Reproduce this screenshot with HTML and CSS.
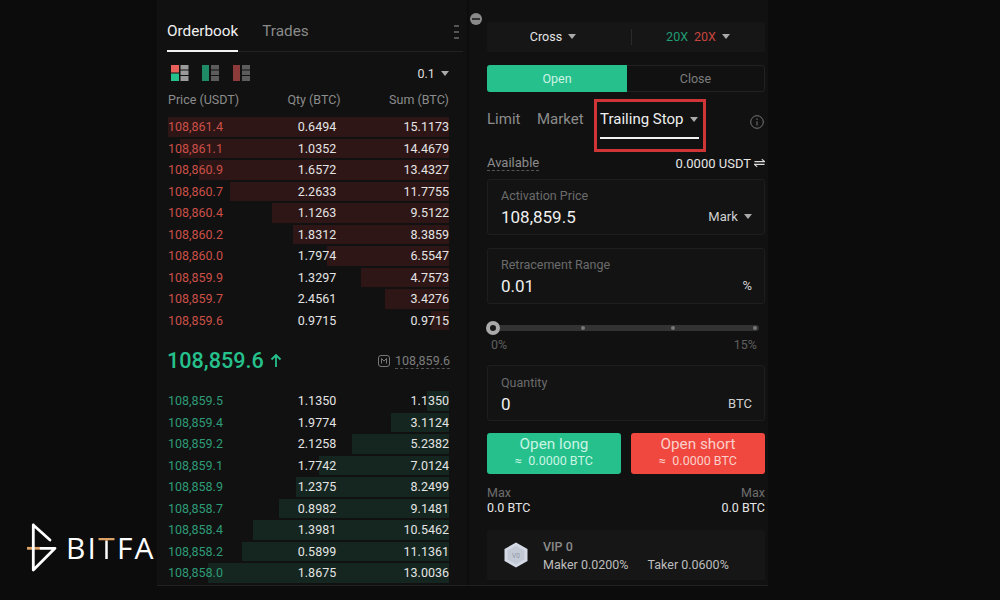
FILE: index.html
```html
<!DOCTYPE html>
<html lang="en">
<head>
    <meta charset="UTF-8">
    <title>BTC Trailing Stop</title>
    <link rel="stylesheet" href="styles.css">
</head>
<body>
    <div class="brand">
        <svg class="brand-mark" width="32" height="50" viewBox="0 0 32 50" fill="none">
            <path d="M0 25.3H14" stroke="#dfa266" stroke-width="2.8"/>
            <path d="M6.3 2V47L28 25.3H14M6.3 2L23 17" stroke="#fff" stroke-width="2.8" stroke-linejoin="round" stroke-linecap="round"/>
        </svg>
        <span class="brand-name">BI<span class="brand-t">T</span>FA</span>
    </div>

    <div class="screen">
        <section class="orderbook">
            <div class="book-tabs">
                <span class="book-tab active">Orderbook</span>
                <span class="book-tab">Trades</span>
                <span class="kebab"></span>
            </div>
            <div class="book-tools">
                <svg width="18" height="16" viewBox="0 0 18 16">
                    <rect x="0" y="0" width="8" height="7.5" fill="#e8605a"/>
                    <rect x="0" y="8.5" width="8" height="7.5" fill="#26c08d"/>
                    <rect x="9.5" y="0" width="8" height="4.5" fill="#9a9a9a"/>
                    <rect x="9.5" y="5.5" width="8" height="4.5" fill="#9a9a9a"/>
                    <rect x="9.5" y="11" width="8" height="5" fill="#9a9a9a"/>
                </svg>
                <svg width="18" height="16" viewBox="0 0 18 16">
                    <rect x="0" y="0" width="7" height="16" fill="#1f8a66"/>
                    <rect x="9" y="0" width="8" height="4.5" fill="#5c5c5c"/>
                    <rect x="9" y="5.5" width="8" height="4.5" fill="#5c5c5c"/>
                    <rect x="9" y="11" width="8" height="5" fill="#5c5c5c"/>
                </svg>
                <svg width="18" height="16" viewBox="0 0 18 16">
                    <rect x="0" y="0" width="7" height="16" fill="#8c3a3a"/>
                    <rect x="9" y="0" width="8" height="4.5" fill="#5c5c5c"/>
                    <rect x="9" y="5.5" width="8" height="4.5" fill="#5c5c5c"/>
                    <rect x="9" y="11" width="8" height="5" fill="#5c5c5c"/>
                </svg>
                <span class="precision">0.1 <i class="caret"></i></span>
            </div>
            <div class="book-head">
                <span>Price (USDT)</span>
                <span>Qty (BTC)</span>
                <span>Sum (BTC)</span>
            </div>

            <div class="rows asks">
                <div class="row"><div class="bar" style="width:100%"></div><span>108,861.4</span><span>0.6494</span><span>15.1173</span></div>
                <div class="row"><div class="bar" style="width:95.7%"></div><span>108,861.1</span><span>1.0352</span><span>14.4679</span></div>
                <div class="row"><div class="bar" style="width:88.9%"></div><span>108,860.9</span><span>1.6572</span><span>13.4327</span></div>
                <div class="row"><div class="bar" style="width:77.9%"></div><span>108,860.7</span><span>2.2633</span><span>11.7755</span></div>
                <div class="row"><div class="bar" style="width:63%"></div><span>108,860.4</span><span>1.1263</span><span>9.5122</span></div>
                <div class="row"><div class="bar" style="width:55.5%"></div><span>108,860.2</span><span>1.8312</span><span>8.3859</span></div>
                <div class="row"><div class="bar" style="width:43.3%"></div><span>108,860.0</span><span>1.7974</span><span>6.5547</span></div>
                <div class="row"><div class="bar" style="width:31.5%"></div><span>108,859.9</span><span>1.3297</span><span>4.7573</span></div>
                <div class="row"><div class="bar" style="width:22.7%"></div><span>108,859.7</span><span>2.4561</span><span>3.4276</span></div>
                <div class="row"><div class="bar" style="width:6.4%"></div><span>108,859.6</span><span>0.9715</span><span>0.9715</span></div>
            </div>

            <div class="mid-price">
                <span class="last">108,859.6 <svg class="last-arrow" width="12" height="15" viewBox="0 0 12 15" fill="none" stroke="#26c08d" stroke-width="1.8"><path d="M6 14V2M1.5 6.5L6 2L10.5 6.5"/></svg></span>
                <span class="mark">
                    <svg width="12" height="12" viewBox="0 0 12 12" fill="none" stroke="#777" stroke-width="1"><rect x="0.5" y="0.5" width="11" height="11" rx="2.5"/><path d="M3.5 8.5V3.5L6 6L8.5 3.5V8.5"/></svg>
                    <span class="mark-value">108,859.6</span>
                </span>
            </div>

            <div class="rows bids">
                <div class="row"><div class="bar" style="width:7.8%"></div><span>108,859.5</span><span>1.1350</span><span>1.1350</span></div>
                <div class="row"><div class="bar" style="width:20.6%"></div><span>108,859.4</span><span>1.9774</span><span>3.1124</span></div>
                <div class="row"><div class="bar" style="width:34.6%"></div><span>108,859.2</span><span>2.1258</span><span>5.2382</span></div>
                <div class="row"><div class="bar" style="width:46.4%"></div><span>108,859.1</span><span>1.7742</span><span>7.0124</span></div>
                <div class="row"><div class="bar" style="width:54.6%"></div><span>108,858.9</span><span>1.2375</span><span>8.2499</span></div>
                <div class="row"><div class="bar" style="width:60.5%"></div><span>108,858.7</span><span>0.8982</span><span>9.1481</span></div>
                <div class="row"><div class="bar" style="width:69.8%"></div><span>108,858.4</span><span>1.3981</span><span>10.5462</span></div>
                <div class="row"><div class="bar" style="width:73.7%"></div><span>108,858.2</span><span>0.5899</span><span>11.1361</span></div>
                <div class="row"><div class="bar" style="width:85.8%"></div><span>108,858.0</span><span>1.8675</span><span>13.0036</span></div>
            </div>
        </section>

        <section class="trade">
            <span class="collapse"></span>

            <div class="margin-bar">
                <div class="margin-cell cross">Cross <i class="caret"></i></div>
                <div class="margin-cell"><span class="up">20X</span><span class="down">20X</span><i class="caret leverage-caret"></i></div>
            </div>

            <div class="side-switch">
                <span class="side active">Open</span>
                <span class="side">Close</span>
            </div>

            <div class="order-tabs">
                <span class="order-tab">Limit</span>
                <span class="order-tab">Market</span>
                <span class="order-tab active">Trailing Stop <i class="caret"></i></span>
                <svg class="info" width="14" height="14" viewBox="0 0 14 14" fill="none" stroke="#777" stroke-width="1"><circle cx="7" cy="7" r="6.3"/><path d="M7 6.3V10.5M7 3.5V5"/></svg>
            </div>

            <div class="available">
                <span class="available-label">Available</span>
                <span class="available-value">0.0000 USDT
                    <svg width="11" height="10" viewBox="0 0 12 10" fill="none" stroke="#ddd" stroke-width="1.2"><path d="M0.5 3.5H11.5L8.5 0.8M11.5 6.5H0.5L3.5 9.2"/></svg>
                </span>
            </div>

            <div class="field">
                <div class="field-label">Activation Price</div>
                <div class="field-line">
                    <span class="field-value">108,859.5</span>
                    <span class="field-unit">Mark <i class="caret"></i></span>
                </div>
            </div>

            <div class="field">
                <div class="field-label">Retracement Range</div>
                <div class="field-line">
                    <span class="field-value">0.01</span>
                    <span class="field-unit">%</span>
                </div>
            </div>

            <div class="slider">
                <div class="track">
                    <span class="knob"></span>
                    <span class="tick" style="left:33%"></span>
                    <span class="tick" style="left:67%"></span>
                    <span class="tick" style="left:97.7%"></span>
                </div>
                <div class="slider-labels"><span>0%</span><span>15%</span></div>
            </div>

            <div class="field quantity">
                <div class="field-label">Quantity</div>
                <div class="field-line">
                    <span class="field-value">0</span>
                    <span class="field-unit">BTC</span>
                </div>
            </div>

            <div class="actions">
                <button class="action long">Open long<small>≈ &nbsp;0.0000 BTC</small></button>
                <button class="action short">Open short<small>≈ &nbsp;0.0000 BTC</small></button>
            </div>

            <div class="limits">
                <div><span class="limit-label">Max</span>0.0 BTC</div>
                <div class="right"><span class="limit-label">Max</span>0.0 BTC</div>
            </div>

            <div class="vip">
                <svg width="24" height="26" viewBox="0 0 24 26">
                    <path d="M12 0.5L23.5 7V19L12 25.5L0.5 19V7Z" fill="#d5dbe6"/>
                    <path d="M12 3.5L20.5 8.5V17.5L12 22.5L3.5 17.5V8.5Z" fill="#c3cad6"/>
                    <text x="12" y="15.5" text-anchor="middle" font-size="6.5" fill="#8d95a3">V0</text>
                </svg>
                <div class="vip-text">
                    <div class="vip-level">VIP 0</div>
                    <div class="vip-fees"><span>Maker 0.0200%</span><span>Taker 0.0600%</span></div>
                </div>
            </div>
        </section>
    </div>
</body>
</html>
```

FILE: styles.css
```css
* {
    box-sizing: border-box;
}
html, body {
    margin: 0;
    height: 100%;
}
body {
    width: 1000px;
    height: 600px;
    overflow: hidden;
    background: #0c0c0c;
    color: #e6e6e6;
    font-family: Roboto, 'Noto Sans', sans-serif;
    font-size: 12.5px;
}
.brand {
    position: absolute;
    left: 27px;
    top: 523px;
    z-index: 2;
    display: flex;
    align-items: center;
    gap: 7px;
}
.brand-name {
    color: #fff;
    font-family: 'Open Sans', sans-serif;
    font-size: 30px;
    font-weight: 500;
    letter-spacing: 2.2px;
    line-height: 48px;
}
.brand-t {
    background: linear-gradient(#dfa266 13.5px, #fff 13.5px);
    -webkit-background-clip: text;
    background-clip: text;
    -webkit-text-fill-color: transparent;
}
.screen {
    display: flex;
    margin-left: 157px;
    height: 586px;
    width: 611px;
    border-bottom: 1px solid #241f24;
}
.caret {
    display: inline-block;
    width: 0;
    height: 0;
    margin-left: 3px;
    border-left: 4.5px solid transparent;
    border-right: 4.5px solid transparent;
    border-top: 5px solid #aaa;
    vertical-align: 2px;
}

/* orderbook column */
.orderbook {
    width: 310px;
    padding: 14px 18px 0 11px;
    background: #111111;
}
.book-tabs {
    display: flex;
    align-items: flex-start;
    gap: 24px;
    height: 38px;
    margin: 0 -14px 0 -1px;
    border-bottom: 1px solid #222;
    font-size: 15.3px;
}
.book-tab {
    height: 38px;
    padding-top: 8px;
    color: #8a8a8a;
}
.book-tab.active {
    color: #f0f0f0;
    border-bottom: 2px solid #f2f2f2;
}
.kebab {
    width: 5px;
    height: 14px;
    margin: 11px 4px 0 auto;
    border-top: 2px solid #555;
    border-bottom: 2px solid #555;
    background: linear-gradient(#555, #555) center / 100% 2px no-repeat;
}
.book-tools {
    display: flex;
    align-items: center;
    gap: 13px;
    height: 40px;
    padding: 2px 0 0 3px;
}
.precision {
    margin-left: auto;
    color: #ddd;
}
.book-head {
    display: grid;
    grid-template-columns: 1fr 1fr 1fr;
    height: 16px;
    line-height: 16px;
    margin-bottom: 8px;
    color: #8c8c8c;
}
.book-head span:nth-child(2) {
    text-align: center;
    padding-left: 11px;
}
.book-head span:nth-child(3) {
    text-align: right;
}
.row {
    position: relative;
    display: grid;
    grid-template-columns: 1fr 1fr 1fr;
    height: 21.55px;
    line-height: 21.55px;
    color: #e4e4e4;
}
.row span {
    position: relative;
}
.row span:nth-of-type(2) {
    text-align: center;
    padding-left: 17px;
}
.row span:nth-of-type(3) {
    text-align: right;
}
.bar {
    position: absolute;
    top: 1px;
    right: 0;
    bottom: 1px;
}
.asks .bar {
    background: #2e1616;
}
.bids .bar {
    background: #14261f;
}
.asks .row span:first-of-type {
    color: #cb5048;
}
.bids .row span:first-of-type {
    color: #2e9b77;
}
.mid-price {
    display: flex;
    justify-content: space-between;
    align-items: center;
    height: 58.5px;
    margin-right: -1px;
}
.last {
    margin-left: -1px;
    color: #26c08d;
    font-size: 21.6px;
    font-weight: 500;
}
.last-arrow {
    margin-left: 1px;
}
.mark {
    display: flex;
    align-items: center;
    gap: 5px;
    color: #7d7d7d;
}
.mark-value {
    border-bottom: 1px dashed #555;
}

/* trade form column */
.trade {
    position: relative;
    flex: 1;
    margin-left: 2px;
    padding: 22px 3px 0 18px;
    background: #111111;
}
.collapse {
    position: absolute;
    left: 1px;
    top: 13px;
    width: 12px;
    height: 12px;
    border-radius: 50%;
    background: linear-gradient(#333, #333) center / 8px 2px no-repeat, #8a8a8a;
}
.margin-bar {
    display: grid;
    grid-template-columns: 144px 1fr;
    height: 30px;
    background: #161616;
    border-radius: 2px;
    line-height: 30px;
    text-align: center;
}
.cross {
    padding-right: 12px;
}
.margin-cell + .margin-cell {
    background: linear-gradient(#2a2a2a, #2a2a2a) left center / 1px 16px no-repeat;
}
.up {
    margin-right: 6px;
    color: #1f9e74;
}
.down {
    color: #c8453f;
}
.leverage-caret {
    margin-left: 6px;
}
.side-switch {
    display: grid;
    grid-template-columns: 139px 1fr;
    height: 27px;
    margin-top: 13px;
    border: 1px solid #222;
    border-radius: 3px;
    line-height: 25px;
    text-align: center;
    color: #7d7d7d;
}
.side.active {
    margin: -1px 0 -1px -1px;
    line-height: 27px;
    background: #26c08d;
    border-radius: 3px 0 0 3px;
    color: #cdf3e3;
}
.order-tabs {
    display: flex;
    align-items: center;
    gap: 16.5px;
    height: 40px;
    margin-top: 7px;
    font-size: 15px;
    color: #8c8c8c;
}
.order-tab.active {
    position: relative;
    color: #efefef;
}
/* red highlight box drawn on the screenshot */
.order-tab.active::before {
    content: "";
    box-sizing: border-box;
    position: absolute;
    left: -6px;
    top: -11px;
    width: 112px;
    height: 53px;
    border: 3px solid #cf3436;
}
.order-tab.active::after {
    content: "";
    position: absolute;
    left: 0;
    width: 99px;
    top: 27px;
    height: 2px;
    background: #f2f2f2;
}
.info {
    margin: 6px 1px 0 auto;
}
.available {
    display: flex;
    justify-content: space-between;
    align-items: center;
    height: 22px;
    margin-top: 13px;
    margin-bottom: 5px;
}
.available-label {
    color: #8c8c8c;
    font-size: 13px;
    border-bottom: 1px dashed #555;
}
.available-value {
    font-size: 13px;
    color: #e6e6e6;
}
.field {
    height: 56px;
    margin-bottom: 13px;
    padding: 9px 12px 0 13px;
    border: 1px solid #1e1e1e;
    border-radius: 3px;
    background: #131313;
}
.field.quantity {
    margin-bottom: 12px;
    padding-top: 10px;
}
.field-label {
    color: #6b6b6b;
    line-height: 14px;
}
.field-line {
    display: flex;
    justify-content: space-between;
    align-items: center;
    margin-top: 3px;
    line-height: 22px;
}
.field-value {
    font-size: 17px;
    color: #efefef;
}
.field-unit {
    font-size: 13px;
    color: #d0d0d0;
}
.slider {
    height: 48px;
    padding-top: 8px;
}
.track {
    position: relative;
    height: 6px;
    margin: 0 6px;
    border-radius: 3px;
    background: #333;
}
.knob {
    position: absolute;
    left: -7px;
    top: -4px;
    width: 14px;
    height: 14px;
    border: 4px solid #aaa;
    border-radius: 50%;
    background: #1a1a1a;
}
.tick {
    position: absolute;
    top: 1px;
    width: 4px;
    height: 4px;
    border-radius: 50%;
    background: #777;
}
.slider-labels {
    display: flex;
    justify-content: space-between;
    margin-top: 6px;
    padding: 0 8px 0 4px;
    line-height: 15px;
    color: #5f5f5f;
}
.actions {
    display: grid;
    grid-template-columns: 134px 134px;
    justify-content: space-between;
}
.action {
    height: 41px;
    padding: 0 0 7px;
    border: 0;
    border-radius: 3px;
    font-family: inherit;
    font-size: 15.3px;
    line-height: 22px;
}
.action small {
    display: block;
    font-size: 12.5px;
    line-height: 12px;
}
.long {
    background: #26c08d;
    color: #c9f5e2;
}
.short {
    background: #f0483e;
    color: #fbd0cb;
}
.limits {
    display: flex;
    justify-content: space-between;
    margin-top: 11px;
    line-height: 15px;
}
.limit-label {
    display: block;
    color: #6e6e6e;
}
.right {
    text-align: right;
}
.vip {
    display: flex;
    align-items: center;
    gap: 15px;
    height: 50px;
    margin-top: 15px;
    padding-left: 17px;
    background: #161616;
    border-radius: 3px;
}
.vip-level {
    color: #8a8a8a;
    font-weight: 500;
    line-height: 18px;
}
.vip-fees {
    display: flex;
    gap: 19px;
    color: #bdbdbd;
    line-height: 17px;
}
```
